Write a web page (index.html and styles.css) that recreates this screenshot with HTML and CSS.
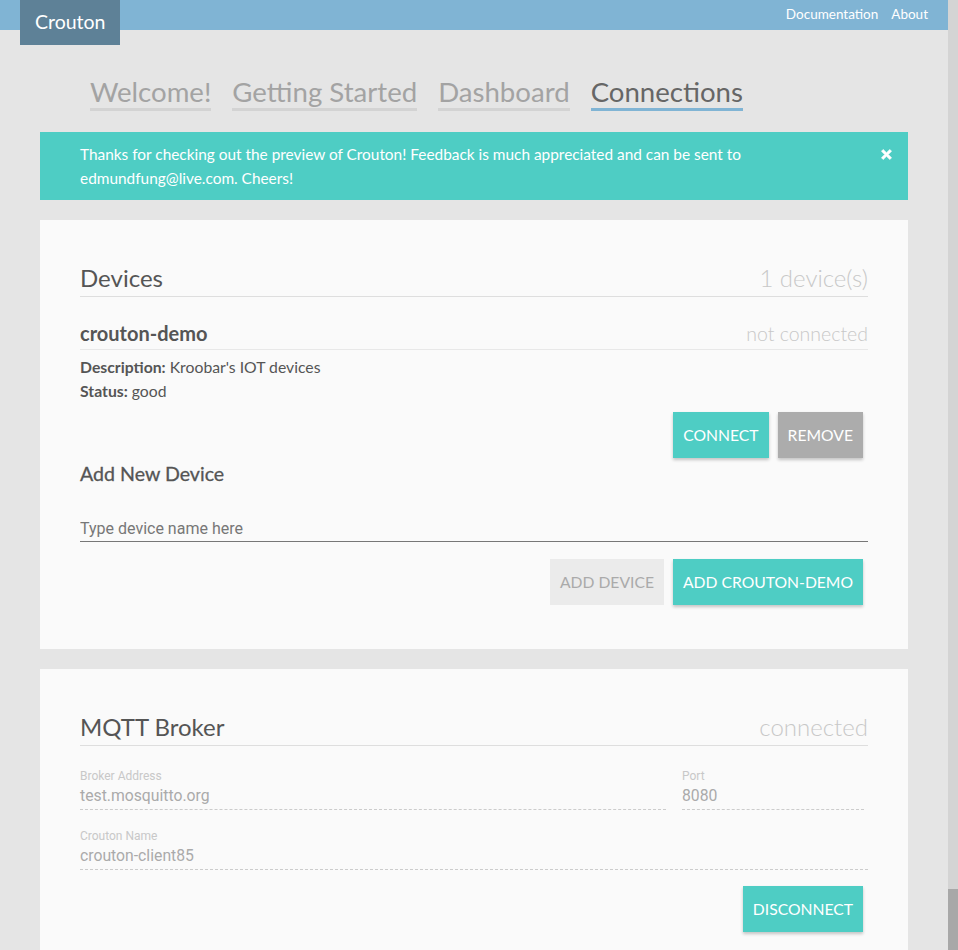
FILE: index.html
```html
<!DOCTYPE html>
<html lang="en">
<head>
    <meta charset="UTF-8">
    <meta name="viewport" content="width=device-width, initial-scale=1.0">
    <title>Crouton - Connections</title>
    <link rel="stylesheet" href="styles.css">
</head>
<body>
    <header class="topbar">
        <div class="brand">Crouton</div>
        <nav class="toplinks">
            <a href="#">Documentation</a>
            <a href="#">About</a>
        </nav>
    </header>

    <main class="page">
        <nav class="tabs">
            <a class="tab" href="#">Welcome!</a>
            <a class="tab" href="#">Getting Started</a>
            <a class="tab" href="#">Dashboard</a>
            <a class="tab active" href="#">Connections</a>
        </nav>

        <div class="alert">
            <p class="alert-text">Thanks for checking out the preview of Crouton! Feedback is much appreciated and can be sent to edmundfung@live.com. Cheers!</p>
            <svg class="alert-close" width="11" height="11" viewBox="0 0 11 11">
                <path d="M2.2 0.4 L5.5 3.7 L8.8 0.4 L10.6 2.2 L7.3 5.5 L10.6 8.8 L8.8 10.6 L5.5 7.3 L2.2 10.6 L0.4 8.8 L3.7 5.5 L0.4 2.2 Z" fill="#fff" stroke="#fff" stroke-width="0.6" stroke-linejoin="round"/>
            </svg>
        </div>

        <!-- devices -->
        <section class="card">
            <div class="card-head">
                <h2>Devices</h2>
                <span class="card-state">1 device(s)</span>
            </div>

            <div class="device">
                <div class="device-head">
                    <h3>crouton-demo</h3>
                    <span class="device-state">not connected</span>
                </div>
                <div class="meta">
                    <p><strong>Description:</strong> Kroobar's IOT devices</p>
                    <p><strong>Status:</strong> good</p>
                </div>
                <div class="actions">
                    <button class="btn">Connect</button>
                    <button class="btn btn-grey">Remove</button>
                </div>
            </div>

            <h3 class="sub-title">Add New Device</h3>
            <input class="name-input" type="text" placeholder="Type device name here">
            <div class="actions actions-wide">
                <button class="btn btn-disabled">Add Device</button>
                <button class="btn">Add crouton-demo</button>
            </div>
        </section>

        <!-- broker -->
        <section class="card">
            <div class="card-head">
                <h2>MQTT Broker</h2>
                <span class="card-state">connected</span>
            </div>

            <div class="fields">
                <div class="field">
                    <label>Broker Address</label>
                    <div class="field-value">test.mosquitto.org</div>
                </div>
                <div class="field field-port">
                    <label>Port</label>
                    <div class="field-value">8080</div>
                </div>
                <div class="field field-full">
                    <label>Crouton Name</label>
                    <div class="field-value">crouton-client85</div>
                </div>
            </div>
            <div class="actions actions-form">
                <button class="btn">Disconnect</button>
            </div>
        </section>
    </main>

    <div class="scrollbar"><div class="scrollbar-thumb"></div></div>
</body>
</html>
```

FILE: styles.css
```css
html {
    overflow: hidden;
}
body {
    margin: 0 10px 0 0;
    background-color: #e5e5e5;
    font-family: Lato, "Open Sans", sans-serif;
    color: #555;
}
.topbar {
    display: flex;
    justify-content: space-between;
    align-items: flex-start;
    height: 30px;
    background-color: #80b4d4;
    padding: 0 20px;
}
.brand {
    height: 45px;
    width: 100px;
    box-sizing: border-box;
    padding-left: 15px;
    background-color: #5e8197;
    color: #fff;
    font-size: 19.5px;
    line-height: 43px;
}
.toplinks {
    display: flex;
    gap: 13px;
    line-height: 29px;
}
.toplinks a {
    color: #fff;
    text-decoration: none;
    font-size: 13.5px;
}
.page {
    padding: 0 40px;
}
.tabs {
    display: flex;
    gap: 21px;
    padding: 46px 0 0 50px;
}
.tab {
    font-size: 27.6px;
    line-height: 32px;
    color: #a3a3a3;
    text-decoration: none;
    border-bottom: 3px solid #d3d3d3;
}
.tab.active {
    color: #666;
    border-bottom-color: #80b4d4;
}
.alert {
    display: flex;
    align-items: flex-start;
    justify-content: space-between;
    margin: 21px 0 20px;
    padding: 10px 16px 10px 40px;
    background-color: #4ecdc4;
    color: #fff;
}
.alert-text {
    margin: 0;
    max-width: 760px;
    font-size: 15.4px;
    line-height: 24px;
}
.alert-close {
    margin-top: 7px;
}
.card {
    background-color: #fafafa;
    padding: 43px 40px 44px;
    margin-bottom: 20px;
}
.card-head,
.device-head {
    display: flex;
    justify-content: space-between;
    align-items: baseline;
    border-bottom: 1px solid #dedede;
    padding-bottom: 3px;
}
.card-head h2 {
    margin: 0;
    font-size: 24px;
    font-weight: 400;
    line-height: 30px;
}
.card-state {
    font-size: 24px;
    font-weight: 300;
    color: #c8c8c8;
}
.device {
    margin-top: 25px;
}
.device-head {
    border-bottom-color: #e8e8e8;
    padding-bottom: 4px;
}
.device-head h3 {
    margin: 0;
    font-size: 20px;
    font-weight: 700;
    line-height: 21px;
}
.device-state {
    font-size: 19.5px;
    font-weight: 300;
    color: #c8c8c8;
}
.meta {
    margin-top: 5px;
    font-size: 15.75px;
}
.meta p {
    margin: 0;
    line-height: 24px;
}
.actions {
    display: flex;
    justify-content: flex-end;
    gap: 9px;
    padding-right: 5px;
    margin-top: 9px;
}
.actions-wide {
    margin-top: 17px;
}
.actions-form {
    margin-top: 16px;
}
.btn {
    height: 46px;
    padding: 0 10px;
    border: none;
    background-color: #4ecdc4;
    color: #fff;
    font-family: Lato, sans-serif;
    font-size: 15.7px;
    text-transform: uppercase;
    box-shadow: 0 2px 3px rgba(0, 0, 0, 0.22);
    cursor: pointer;
}
.btn-grey {
    background-color: #acacac;
}
.btn-disabled {
    background-color: #ebebeb;
    color: #aaa;
    box-shadow: none;
}
.sub-title {
    margin: 4px 0 0;
    font-size: 19.6px;
    font-weight: 400;
    line-height: 24px;
    -webkit-text-stroke: 0.3px #555;
}
.name-input {
    display: block;
    width: 100%;
    box-sizing: border-box;
    margin-top: 32px;
    padding: 0 0 3px;
    border: none;
    border-bottom: 1px solid #777;
    background: transparent;
    font-family: Roboto, sans-serif;
    font-size: 16px;
    line-height: 20px;
    height: 24px;
    color: #555;
    outline: none;
}
.name-input::placeholder {
    color: #777;
}
.fields {
    display: grid;
    grid-template-columns: 586px 186px;
    column-gap: 16px;
    row-gap: 19px;
    margin-top: 23px;
    font-family: Roboto, sans-serif;
}
.field label {
    display: block;
    font-size: 12px;
    line-height: 14px;
    color: #c8c8c8;
}
.field-value {
    margin-top: 3px;
    font-size: 15.75px;
    line-height: 20px;
    padding-bottom: 3px;
    color: #aaa;
    border-bottom: 1px dashed #ccc;
}
.field-port {
    margin-right: 4px;
}
.field-full {
    grid-column: 1 / -1;
}
.scrollbar {
    position: fixed;
    top: 0;
    right: 0;
    width: 10px;
    height: 100%;
    background-color: #d4d4d4;
}
.scrollbar-thumb {
    position: absolute;
    bottom: 0;
    left: 0;
    width: 10px;
    height: 61px;
    background-color: #a8a8a8;
}
```
